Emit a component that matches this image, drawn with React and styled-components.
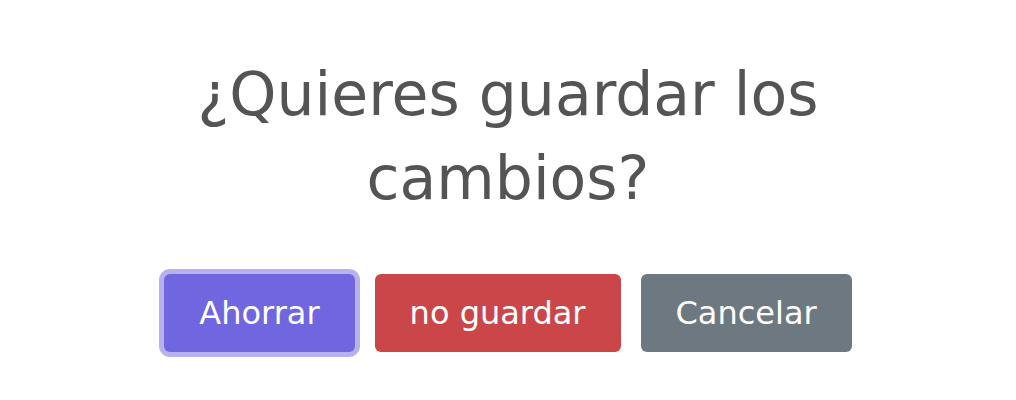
import React from 'react';
import styled, { createGlobalStyle } from 'styled-components';

const Global = createGlobalStyle`
  body {
    margin: 0;
    background: #fff;
    font-family: "DejaVu Sans", "Noto Sans", sans-serif;
  }
`;

const Popup = styled.div`
  width: 1016px;
  height: 400px;
  display: flex;
  flex-direction: column;
  align-items: center;
  padding-top: 52px;
  box-sizing: border-box;
`;

const Title = styled.h2`
  margin: 0;
  width: 680px;
  text-align: center;
  color: #545454;
  font-size: 60px;
  font-weight: 400;
  line-height: 84px;
`;

const Actions = styled.div`
  display: flex;
  gap: 20px;
  margin-top: 54px;
`;

const Button = styled.button`
  height: 78px;
  padding: 0 35px;
  border: 0;
  border-radius: 6px;
  font-family: inherit;
  font-size: 32px;
  color: #fff;
  background: ${({ $bg }) => $bg};
  box-shadow: ${({ $focused }) => ($focused ? '0 0 0 5px rgba(112, 102, 224, 0.5)' : 'none')};
  cursor: pointer;
`;

const App = () => {
  return (
    <>
      <Global />
      <Popup>
        <Title>¿Quieres guardar los cambios?</Title>
        <Actions>
          <Button $bg="#7066e0" $focused>Ahorrar</Button>
          <Button $bg="#ca4649">no guardar</Button>
          <Button $bg="#6e7881">Cancelar</Button>
        </Actions>
      </Popup>
    </>
  );
};

export default App;
